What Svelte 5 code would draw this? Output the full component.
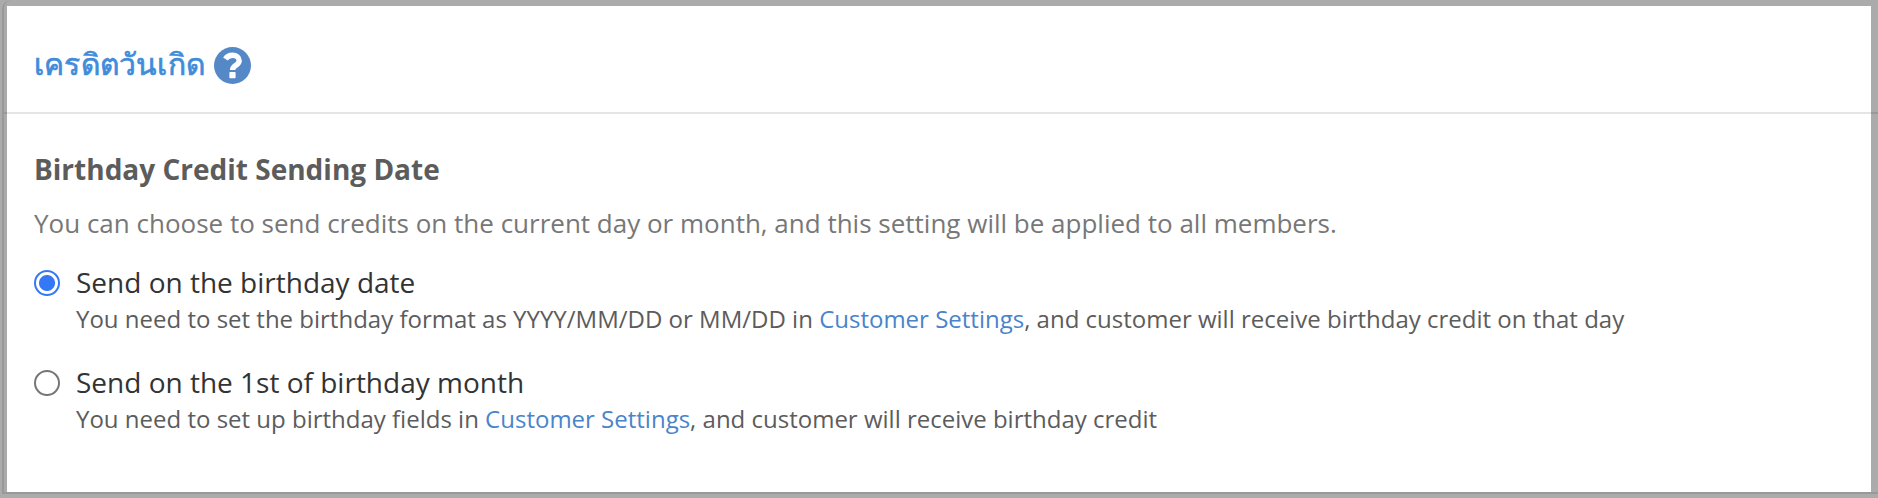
<script lang="ts">
  let selected = $state('date');

  const options = [
    {
      value: 'date',
      label: 'Send on the birthday date',
      before: 'You need to set the birthday format as YYYY/MM/DD or MM/DD in ',
      after: ', and customer will receive birthday credit on that day'
    },
    {
      value: 'month',
      label: 'Send on the 1st of birthday month',
      before: 'You need to set up birthday fields in ',
      after: ', and customer will receive birthday credit'
    }
  ];
</script>

<div class="backdrop">
  <div class="frame">
    <section class="panel">
      <header class="panel-header">
        <h2>เครดิตวันเกิด</h2>
        <svg class="help" viewBox="0 0 37 37" aria-label="Help">
          <circle cx="18.5" cy="18.5" r="18.5" fill="#5488c7" />
          <path d="M11.4 12C13.2 9.1 15.5 8.2 18.6 8.2C22.4 8.2 25.2 10.4 25.2 13.8C25.2 18.4 18.6 18.2 18.6 23" fill="none" stroke="#fff" stroke-width="5.4" />
          <rect x="15.4" y="25" width="6.2" height="6.2" rx="0.8" fill="#fff" />
        </svg>
      </header>
      <div class="panel-body">
        <h3>Birthday Credit Sending Date</h3>
        <p class="intro">You can choose to send credits on the current day or month, and this setting will be applied to all members.</p>
        {#each options as option (option.value)}
          <div class="option">
            <input type="radio" id={option.value} name="sending-date" value={option.value} bind:group={selected} />
            <div>
              <label for={option.value}>{option.label}</label>
              <p class="hint">{option.before}<a href="#settings">Customer Settings</a>{option.after}</p>
            </div>
          </div>
        {/each}
      </div>
    </section>
  </div>
</div>

<style>
  :global(body) {
    background: #ababab;
    overflow: hidden;
  }

  .backdrop {
    box-sizing: border-box;
    height: 498px;
    padding: 0 0 4px 2px;
    background: #ababab;
  }

  .frame {
    box-sizing: border-box;
    height: 494px;
    padding: 6px 7px 0 3px;
    border-left: 2px solid #999;
    border-bottom: 2px solid #999;
    border-top-left-radius: 9px;
  }

  .panel {
    height: 486px;
    background: #fff;
    font-family: 'Open Sans', 'Noto Sans', sans-serif;
  }

  /* the divider runs across the frame on both sides */
  .panel-header {
    box-sizing: border-box;
    height: 108px;
    margin: 0 -7px 0 -3px;
    padding: 0 30px;
    display: flex;
    align-items: center;
    gap: 9px;
    border-bottom: 2px solid rgba(0, 0, 0, 0.1);
  }

  h2, h3, p {
    margin: 0;
  }

  h2 {
    margin-top: 10px;
    color: #3f8cdb;
    font-size: 30px;
    line-height: 42px;
    font-weight: 500;
    letter-spacing: 0.2px;
    -webkit-text-stroke: 0.7px #3f8cdb;
  }

  .help {
    width: 37px;
    height: 37px;
    margin-top: 13px;
  }

  .panel-body {
    padding: 35px 27px 0;
  }

  h3 {
    color: #5c5c5c;
    font-size: 28px;
    line-height: 40px;
    font-weight: 700;
  }

  .intro {
    margin-top: 16px;
    color: #777;
    font-size: 26px;
    line-height: 36px;
  }

  .option {
    display: flex;
    gap: 16px;
    margin-top: 21px;
    height: 79px;
  }

  .intro + .option {
    margin-top: 22px;
  }

  input {
    appearance: none;
    box-sizing: border-box;
    width: 26px;
    height: 26px;
    margin: 7px 0 0;
    border: 2px solid #767676;
    border-radius: 50%;
    background: #fff;
  }

  input:checked {
    border-color: #3478f6;
    background: radial-gradient(circle, #3478f6 7.5px, #fff 8.5px);
  }

  label {
    display: block;
    color: #333;
    font-size: 28px;
    line-height: 38px;
  }

  .hint {
    color: #5c5c5c;
    font-size: 24px;
    line-height: 36px;
    white-space: nowrap;
  }

  a {
    color: #4a84cb;
    text-decoration: none;
  }
</style>
